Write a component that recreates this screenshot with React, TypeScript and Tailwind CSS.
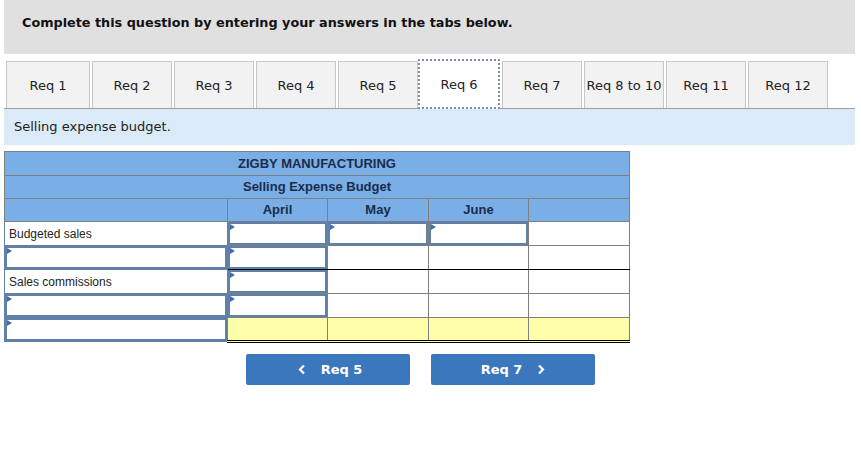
import React from "react";

const Tri = () => (
  <span className="absolute left-0 top-0 h-0 w-0 border-y-[3px] border-l-[5px] border-y-transparent border-l-[#3c6fb4]" />
);

const Input = () => (
  <div className="relative h-[23px] border-2 border-[#6180a8] bg-white">
    <Tri />
  </div>
);

type CellKind = "input" | "plain" | "yellow";

function Cell({ kind, blackBottom, last }: { kind: CellKind; blackBottom?: boolean; last?: boolean }) {
  const base = "p-0 border border-[#7f7f7f] h-[24px]";
  const bottom = last
    ? " border-b-[3px] border-b-black border-double"
    : blackBottom
    ? " border-b-black"
    : "";
  const bg = kind === "yellow" ? " bg-[#ffffa9]" : " bg-white";
  return <td className={base + bottom + bg}>{kind === "input" ? <Input /> : null}</td>;
}

function LabelCell({ text }: { text?: string }) {
  return (
    <td className="h-[24px] border border-[#6180a8] bg-white p-0 pl-[4px] align-middle text-[12px] text-[#222]">
      {text}
    </td>
  );
}

const headCell = "border border-[#7f7f7f] bg-[#79aee6] p-0 text-center text-[13px] font-bold text-[#1c2b4a]";

export default function App() {
  const tabs = ["Req 1", "Req 2", "Req 3", "Req 4", "Req 5", "Req 6", "Req 7", "Req 8 to 10", "Req 11", "Req 12"];
  return (
    <div className="h-[452px] w-[861px] bg-white" style={{ fontFamily: '"DejaVu Sans", Verdana, sans-serif' }}>
      <div className="ml-[4px] w-[851px]">
        <div className="h-[54px] bg-[#e0e0e0] pl-[18px] pt-[13px] text-[12.8px] font-bold text-[#111]">
          Complete this question by entering your answers in the tabs below.
        </div>
        <div className="mt-[5px] flex h-[50px] items-end gap-[2px] border-b border-[#a0a0a0] pl-[2px]">
          {tabs.map((t, i) =>
            i === 5 ? (
              <div
                key={t}
                className="relative z-10 -mb-px -ml-[2px] flex h-[50px] w-[82px] items-center justify-center border-2 border-dotted border-[#7f8ea6] bg-white pt-[1px] text-[13px] text-[#222]"
              >
                {t}
              </div>
            ) : (
              <div
                key={t}
                className={
                  "flex h-[47px] items-center justify-center border border-b-0 border-[#c8c8c8] bg-[#f2f2f2] pt-[1px] text-[13px] text-[#222] " +
                  (i === 0 ? "w-[84px]" : "w-[80px]")
                }
              >
                {t}
              </div>
            )
          )}
        </div>
        <div className="flex h-[36px] items-center bg-[#dbeaf8] pl-[10px] text-[13px] text-[#222]">
          Selling expense budget.
        </div>
      </div>

      <div className="ml-[4px] mt-[6px]" style={{ fontFamily: '"Liberation Sans", Arial, sans-serif' }}>
        <table className="w-[625px] table-fixed border-collapse">
          <colgroup>
            <col className="w-[223px]" />
            <col className="w-[100px]" />
            <col className="w-[101px]" />
            <col className="w-[100px]" />
            <col className="w-[101px]" />
          </colgroup>
          <tbody>
            <tr className="h-[24px]">
              <td colSpan={5} className={headCell}>
                ZIGBY MANUFACTURING
              </td>
            </tr>
            <tr className="h-[23px]">
              <td colSpan={5} className={headCell}>
                Selling Expense Budget
              </td>
            </tr>
            <tr className="h-[23px]">
              <td className={headCell} />
              <td className={headCell}>April</td>
              <td className={headCell}>May</td>
              <td className={headCell}>June</td>
              <td className={headCell} />
            </tr>
            <tr>
              <LabelCell text="Budgeted sales" />
              <Cell kind="input" />
              <Cell kind="input" />
              <Cell kind="input" />
              <Cell kind="plain" />
            </tr>
            <tr>
              <td className="border border-[#6180a8] p-0">
                <Input />
              </td>
              <Cell kind="input" blackBottom />
              <Cell kind="plain" blackBottom />
              <Cell kind="plain" blackBottom />
              <Cell kind="plain" blackBottom />
            </tr>
            <tr>
              <LabelCell text="Sales commissions" />
              <Cell kind="input" />
              <Cell kind="plain" />
              <Cell kind="plain" />
              <Cell kind="plain" />
            </tr>
            <tr>
              <td className="border border-[#6180a8] p-0">
                <Input />
              </td>
              <Cell kind="input" blackBottom />
              <Cell kind="plain" blackBottom />
              <Cell kind="plain" blackBottom />
              <Cell kind="plain" blackBottom />
            </tr>
            <tr>
              <td className="border border-[#6180a8] p-0">
                <Input />
              </td>
              <Cell kind="yellow" last />
              <Cell kind="yellow" last />
              <Cell kind="yellow" last />
              <Cell kind="yellow" last />
            </tr>
          </tbody>
        </table>
      </div>

      <div className="ml-[246px] mt-[11px] flex gap-[21px]">
        <div className="flex h-[31px] w-[164px] items-center justify-center gap-[15px] rounded-[2px] bg-[#3a77bd] pl-[4px] text-[13px] font-bold text-white">
          <svg width="8" height="11" viewBox="0 0 8 11">
            <path d="M6 1.5 L2 5.5 L6 9.5" fill="none" stroke="white" strokeWidth="2.2" />
          </svg>
          <span>Req 5</span>
        </div>
        <div className="flex h-[31px] w-[164px] items-center justify-center gap-[15px] rounded-[2px] bg-[#3a77bd] text-[13px] font-bold text-white">
          <span>Req 7</span>
          <svg width="8" height="11" viewBox="0 0 8 11">
            <path d="M2 1.5 L6 5.5 L2 9.5" fill="none" stroke="white" strokeWidth="2.2" />
          </svg>
        </div>
      </div>
    </div>
  );
}
